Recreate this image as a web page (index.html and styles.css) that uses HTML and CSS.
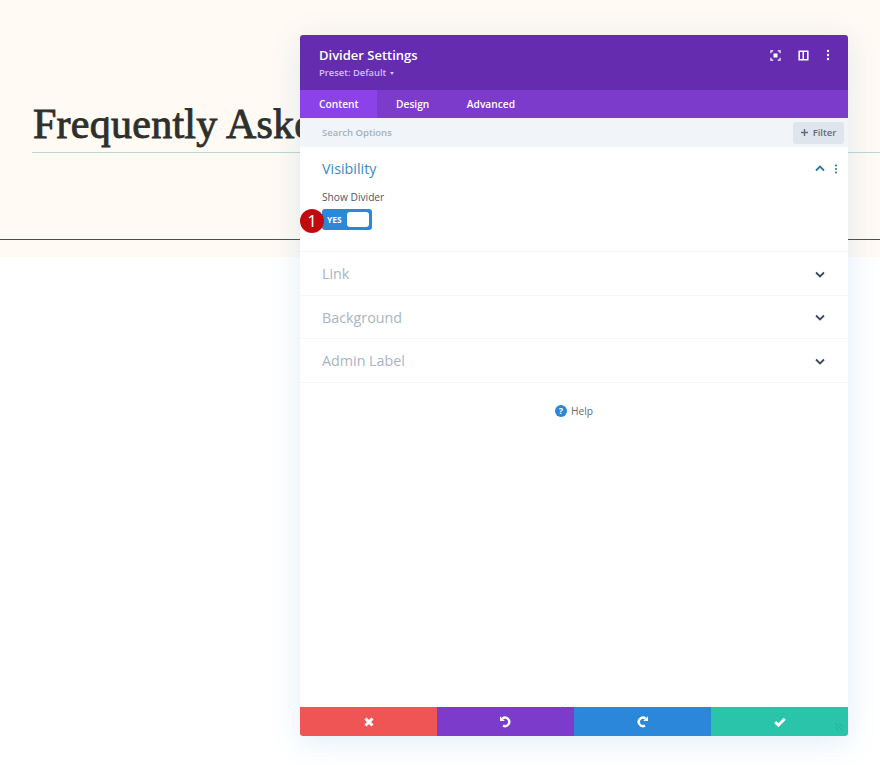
FILE: index.html
```html
<!DOCTYPE html>
<html lang="en">
<head>
    <meta charset="UTF-8">
    <title>Divider Settings</title>
    <link rel="stylesheet" href="styles.css">
</head>
<body>

<div class="hero">
    <h1 class="hero-title">Frequently Asked Questions</h1>
    <div class="title-line"></div>
    <div class="hero-line"></div>
</div>

<div class="modal">
    <div class="modal-header">
        <div>
            <h2 class="modal-title">Divider Settings</h2>
            <div class="preset">Preset: Default <span class="preset-arrow"></span></div>
        </div>
        <div class="header-icons">
            <svg width="11" height="11" viewBox="0 0 12 12" fill="none" stroke="#fff" stroke-width="1.200">
                <path d="M3.500 1H1v2.500M8.500 1H11v2.500M3.500 11H1V8.500M8.500 11H11V8.500"/>
                <rect x="3.800" y="3.800" width="4.400" height="4.400" fill="#fff" stroke="none"/>
            </svg>
            <svg width="11" height="11" viewBox="0 0 11 11">
                <path fill="#fff" fill-rule="evenodd" d="M1 .5h9a.6.6 0 0 1 .6.6v8.800a.6.6 0 0 1-.6.6H1a.6.6 0 0 1-.6-.6V1.100A.6.6 0 0 1 1 .5zM2 2v7h2.500V2zM6 2v7h3V2z"/>
            </svg>
            <svg width="4" height="12" viewBox="0 0 4 12" fill="#fff">
                <circle cx="2" cy="2" r="1.200"/><circle cx="2" cy="6" r="1.200"/><circle cx="2" cy="10" r="1.200"/>
            </svg>
        </div>
    </div>

    <div class="tabs">
        <div class="tab active">Content</div>
        <div class="tab">Design</div>
        <div class="tab">Advanced</div>
    </div>

    <div class="search-bar">
        <span class="search-text">Search Options</span>
        <button class="filter-btn">
            <svg width="7" height="7" viewBox="0 0 7 7" fill="none" stroke="#5F6B7A" stroke-width="1.400"><path d="M3.500 0v7M0 3.500h7"/></svg>
            <span>Filter</span>
        </button>
    </div>

    <div class="modal-body">
        <div class="section open">
            <div class="section-head">
                <span class="section-title">Visibility</span>
                <div class="section-icons">
                    <svg width="10" height="7" viewBox="0 0 10 7" fill="none" stroke="#2f77ad" stroke-width="1.800"><path d="M1 5.500l4-4 4 4"/></svg>
                    <svg width="4" height="10" viewBox="0 0 4 10" fill="#2f77ad"><circle cx="2" cy="1.500" r="1.100"/><circle cx="2" cy="5" r="1.100"/><circle cx="2" cy="8.500" r="1.100"/></svg>
                </div>
            </div>
            <div class="field-label">Show Divider</div>
            <div class="toggle">
                <span class="toggle-text">YES</span>
                <span class="toggle-knob"></span>
            </div>
            <span class="step-badge">1</span>
        </div>

        <div class="section">
            <div class="section-head">
                <span class="section-title">Link</span>
                <svg class="chevron" width="10" height="7" viewBox="0 0 10 7" fill="none" stroke="#3b4a5a" stroke-width="1.800"><path d="M1 1.500l4 4 4-4"/></svg>
            </div>
        </div>
        <div class="section">
            <div class="section-head">
                <span class="section-title">Background</span>
                <svg class="chevron" width="10" height="7" viewBox="0 0 10 7" fill="none" stroke="#3b4a5a" stroke-width="1.800"><path d="M1 1.500l4 4 4-4"/></svg>
            </div>
        </div>
        <div class="section">
            <div class="section-head">
                <span class="section-title">Admin Label</span>
                <svg class="chevron" width="10" height="7" viewBox="0 0 10 7" fill="none" stroke="#3b4a5a" stroke-width="1.800"><path d="M1 1.500l4 4 4-4"/></svg>
            </div>
        </div>

        <div class="help">
            <span class="help-icon">?</span>
            <span>Help</span>
        </div>
    </div>

    <div class="modal-footer">
        <button class="footer-btn red">
            <svg width="10" height="10" viewBox="0 0 10 10" fill="none" stroke="#fff" stroke-width="3"><path d="M1.500 1.500l7 7M8.500 1.500l-7 7"/></svg>
        </button>
        <button class="footer-btn purple">
            <svg width="13" height="13" viewBox="0 0 13 13" fill="none" stroke="#fff" stroke-width="2.400"><path d="M3.400 3.600A4.200 4.200 0 1 1 4 10.600"/><path d="M1 1.200v4.800h4.800z" fill="#fff" stroke="none"/></svg>
        </button>
        <button class="footer-btn blue">
            <svg width="13" height="13" viewBox="0 0 13 13" fill="none" stroke="#fff" stroke-width="2.400"><path d="M9.600 3.600A4.200 4.200 0 1 0 9 10.600"/><path d="M12 1.200v4.800H7.200z" fill="#fff" stroke="none"/></svg>
        </button>
        <button class="footer-btn green">
            <svg width="12" height="10" viewBox="0 0 12 10" fill="none" stroke="#fff" stroke-width="2.800"><path d="M1.200 5l3.200 3.200 6.400-6.400"/></svg>
            <svg class="resize-handle" width="10" height="10" viewBox="0 0 10 10" fill="none" stroke="#25b198" stroke-width="1"><path d="M1 5l4 4M1 1l8 8M5 1l4 4"/></svg>
        </button>
    </div>
</div>

</body>
</html>
```

FILE: styles.css
```css
body {
    font-family: 'Open Sans', sans-serif;
    background-color: white;
    margin: 0;
    height: 765px;
    overflow: hidden;
    position: relative;
}

.hero {
    height: 257px;
    background-color: #FFFAF3;
    padding-top: 99px;
    box-sizing: border-box;
}

.hero-title {
    font-family: 'Liberation Serif', serif;
    font-size: 42px;
    font-weight: normal;
    letter-spacing: 0.25px;
    -webkit-text-stroke: 0.9px #2f2f2c;
    line-height: 50px;
    color: #2f2f2c;
    margin: 0 0 0 33px;
    white-space: nowrap;
}

.title-line {
    height: 1px;
    background-color: #bcd6d4;
    margin: 3px 0 0 32px;
}

.hero-line {
    height: 1px;
    background-color: #4d4f52;
    margin-top: 86px;
}

.modal {
    position: absolute;
    left: 300px;
    top: 35px;
    width: 548px;
    height: 701px;
    background-color: white;
    display: flex;
    flex-direction: column;
    border-radius: 3px;
    box-shadow: 0 5px 30px rgba(43, 135, 218, 0.15);
}

.modal-header {
    height: 55px;
    background-color: #652CB0;
    border-radius: 3px 3px 0 0;
    display: flex;
    justify-content: space-between;
    padding: 0 18px 0 19px;
    box-sizing: border-box;
}

.modal-title {
    font-size: 13px;
    font-weight: 600;
    color: white;
    margin: 11px 0 0;
    line-height: 18px;
}

.preset {
    font-size: 9.400px;
    font-weight: 600;
    color: #d5bdf5;
    margin-top: 2px;
    line-height: 14px;
}

.preset-arrow {
    display: inline-block;
    width: 0;
    height: 0;
    border-left: 2.5px solid transparent;
    border-right: 2.5px solid transparent;
    border-top: 3px solid #d5bdf5;
    margin-left: 1px;
    vertical-align: middle;
}

.header-icons {
    display: flex;
    align-items: center;
    gap: 17px;
    height: 40px;
}

.tabs {
    height: 28px;
    background-color: #7C3BCB;
    display: flex;
}

.tab {
    font-size: 10.200px;
    font-weight: 600;
    color: white;
    line-height: 28px;
    padding: 0 18.500px 0 19px;
}

.tab.active {
    background-color: #8B42E8;
}

.search-bar {
    height: 29px;
    background-color: #F1F5F9;
    display: flex;
    justify-content: space-between;
    align-items: center;
    padding: 0 4px 0 22px;
    box-sizing: border-box;
}

.search-text {
    font-size: 9.500px;
    font-weight: 600;
    color: #A3B0C2;
    margin-top: -1px;
}

.filter-btn {
    height: 22px;
    width: 51px;
    background-color: #DFE5EC;
    border: none;
    border-radius: 3px;
    padding: 0;
    font-family: inherit;
    font-size: 9.500px;
    font-weight: 600;
    color: #5F6B7A;
    display: flex;
    align-items: center;
    justify-content: center;
    gap: 5px;
}

.modal-body {
    flex: 1;
}

.section {
    border-bottom: 1px solid #F4F6F8;
    padding: 0 22px;
    height: 43.500px;
    box-sizing: border-box;
}

.section.open {
    height: 105px;
    position: relative;
}

.section-head {
    display: flex;
    justify-content: space-between;
    align-items: center;
    height: 43px;
}

.section-title {
    font-size: 14.300px;
    font-weight: 400;
    color: #A9B4C2;
}

.section.open .section-title {
    color: #3A8BBF;
}

.section-icons {
    display: flex;
    align-items: center;
    gap: 9px;
    margin-right: -12px;
}

.chevron {
    margin-right: 1px;
    margin-top: 1px;
}

.field-label {
    font-size: 10.200px;
    font-weight: 500;
    color: #4C5866;
    line-height: 14px;
}

.toggle {
    width: 50px;
    height: 21px;
    margin-top: 5px;
    background-color: #2B87DA;
    border-radius: 3px;
    display: flex;
    align-items: center;
    justify-content: space-between;
    padding: 0 3px 0 5px;
    box-sizing: border-box;
}

.toggle-text {
    font-size: 8.500px;
    font-weight: 700;
    color: white;
}

.toggle-knob {
    width: 22px;
    height: 15px;
    background-color: white;
    border-radius: 3px;
}

.step-badge {
    position: absolute;
    left: 0;
    top: 62px;
    width: 24px;
    height: 24px;
    border-radius: 50%;
    background-color: #C20A0E;
    color: white;
    font-size: 17px;
    font-weight: 500;
    line-height: 24px;
    text-align: center;
}

.help {
    display: flex;
    justify-content: center;
    align-items: center;
    gap: 4px;
    font-size: 10.200px;
    font-weight: 500;
    color: #5F6B7A;
    margin-top: 21px;
    height: 14px;
}

.help-icon {
    width: 12px;
    height: 12px;
    border-radius: 50%;
    background-color: #2B87DA;
    color: white;
    font-size: 9px;
    font-weight: 700;
    line-height: 12px;
    text-align: center;
}

.modal-footer {
    height: 29px;
    display: flex;
}

.footer-btn {
    flex: 1;
    border: none;
    padding: 0;
    display: flex;
    align-items: center;
    justify-content: center;
    position: relative;
}

.resize-handle {
    position: absolute;
    right: 4px;
    bottom: 4px;
}

.red {
    background-color: #EF5555;
    border-radius: 0 0 0 3px;
}

.purple {
    background-color: #7C3BCB;
}

.blue {
    background-color: #2B87DA;
}

.green {
    background-color: #29C4A9;
    border-radius: 0 0 3px 0;
}
```
